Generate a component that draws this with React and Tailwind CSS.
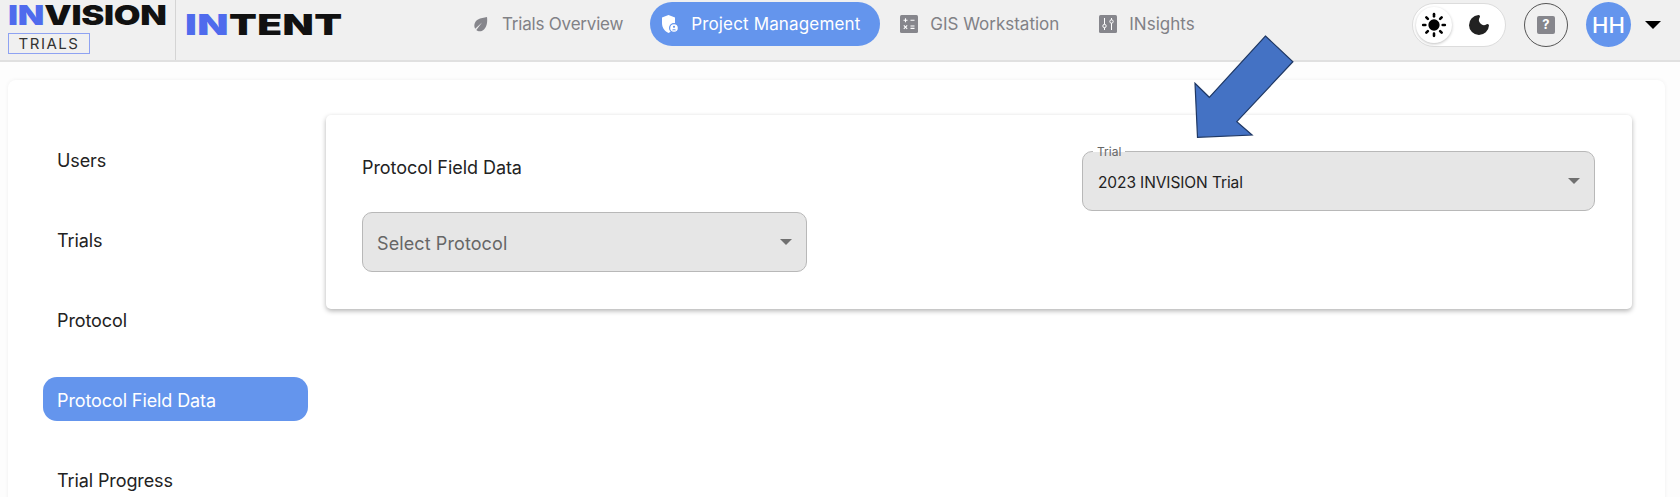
import React from "react";
import { Moon, Sun } from "lucide-react";

const font = { fontFamily: "Inter, 'Noto Sans', sans-serif" };

function Leaf() {
  return (
    <svg width="15" height="17" viewBox="0 0 15 17" fill="#86868c">
      <path d="M14 1C14.600 6 14 10.500 11 13.500C8.500 16 5 15.800 3.300 14L9 6.500L2.200 12.800C0.400 9.600 1.500 5.500 5 3.500C7.500 2 11 2 14 1Z" />
    </svg>
  );
}

function Shield() {
  return (
    <svg width="18" height="20" viewBox="0 0 18 20">
      <path d="M7.500 1L14 3.500V9C14 14 11 17.500 7.500 19C4 17.500 1 14 1 9V3.500Z" fill="#fff" />
      <circle cx="13" cy="14" r="5" fill="#6495ed" />
      <circle cx="13" cy="14" r="3.800" fill="#fff" />
      <circle cx="13" cy="12.800" r="1.100" fill="#6495ed" />
      <path d="M11 16.200C11.300 14.800 14.700 14.800 15 16.200Z" fill="#6495ed" />
    </svg>
  );
}

function Calc() {
  return (
    <svg width="18" height="18" viewBox="0 0 18 18">
      <rect width="18" height="18" rx="1.500" fill="#86868c" />
      <path d="M3.500 5.300H7.500M5.500 3.300V7.300M10.500 5.300H14.500M10.500 11H14.500M10.500 13.400H14.500M3.800 10.400L7.200 13.800M7.200 10.400L3.800 13.800" stroke="#fff" strokeWidth="1.100" />
    </svg>
  );
}

function Sliders() {
  return (
    <svg width="18" height="18" viewBox="0 0 18 18">
      <rect width="18" height="18" rx="1.500" fill="#86868c" />
      <path d="M5.500 3V15M12.500 3V15" stroke="#fff" strokeWidth="1" />
      <circle cx="5.500" cy="11" r="1.700" fill="#86868c" stroke="#fff" />
      <circle cx="12.500" cy="6.500" r="1.700" fill="#86868c" stroke="#fff" />
    </svg>
  );
}

function NavItem({ icon, label, active, className }) {
  return (
    <div
      className={`flex h-11 items-center rounded-full text-[17px] ${
        active ? "bg-[#6495ed] text-white" : "text-[#818186]"
      } ${className}`}
    >
      {icon}
      <span className="pt-[2px]">{label}</span>
    </div>
  );
}

function Caret({ className }) {
  return <div className={`h-0 w-0 border-x-[6px] border-t-[6px] border-x-transparent ${className}`} />;
}

function SelectBox({ label, value, className, textClass }) {
  return (
    <div className={`relative flex h-[60px] items-center justify-between rounded-[10px] border border-[#b8b8b8] bg-[#e6e6e6] pl-[14px] pr-[14px] ${className}`}>
      {label && (
        <span className="absolute -top-[7px] left-[10px] bg-[linear-gradient(#fff_50%,#e6e6e6_50%)] px-[4px] text-xs leading-[14px] text-[#666666]">
          {label}
        </span>
      )}
      <span className={textClass}>{value}</span>
      <Caret className="border-t-[#707070]" />
    </div>
  );
}

const sideItems = ["Users", "Trials", "Protocol", "Protocol Field Data", "Trial Progress"];

export default function App() {
  return (
    <div className="relative h-[497px] w-[1680px] overflow-hidden bg-[#fdfdfd] text-[#222222]" style={font}>
      <header className="flex h-[62px] items-start border-b-2 border-[#e0e0e0] bg-[#f0f0f0]">
        <div className="h-[60px] w-[176px] shrink-0 border-r border-[#d4d4d4] pl-2 pt-[1px]">
          <div className="origin-left scale-x-[1.28] whitespace-nowrap text-[27px] font-black leading-[30px] tracking-[-0.2px] text-[#111111]">
            <span className="text-[#4f6bed]">IN</span>VISION
          </div>
          <div className="mt-[2px] flex h-[21px] w-[82px] items-center justify-center border border-[#8ea2f2] text-[15px] leading-none tracking-[1.5px] text-[#333333]">
            TRIALS
          </div>
        </div>
        <div className="ml-[9px] w-[285px] shrink-0 origin-left scale-x-[1.4] whitespace-nowrap pt-[9px] text-[29px] font-black leading-[32px] tracking-[0.3px] text-[#111111]">
          <span className="text-[#4f6bed]">IN</span>TENT
        </div>
        <nav className="mt-[2px] flex items-center">
          <NavItem icon={<Leaf />} label="Trials Overview" className="gap-[14px] pl-[3px] tracking-[-0.2px]" />
          <NavItem icon={<Shield />} label="Project Management" active className="ml-[27px] w-[230px] gap-[12px] pl-[11px] tracking-[0.15px]" />
          <NavItem icon={<Calc />} label="GIS Workstation" className="ml-[20px] gap-[12px]" />
          <NavItem icon={<Sliders />} label="INsights" className="ml-[40px] gap-[12px]" />
        </nav>
        <div className="ml-auto mr-[19px] mt-[2px] flex items-center">
          <div className="flex h-11 w-[94px] items-center rounded-full border border-[#dcdcdc] bg-white pl-[3px]">
            <div className="flex h-[36px] w-[36px] items-center justify-center rounded-full bg-white shadow-[0_1px_3px_rgba(0,0,0,0.25)]">
              <Sun size={26} strokeWidth={2.4} fill="#000" color="#000" />
            </div>
            <Moon size={24} className="ml-[15px]" fill="#222" color="#222" />
          </div>
          <div className="ml-[18px] flex h-11 w-11 items-center justify-center rounded-full border border-[#555555]">
            <div className="flex h-[18px] w-[18px] items-center justify-center rounded-[2px] bg-[#86868c] text-[13px] font-bold leading-none text-white">?</div>
          </div>
          <div className="ml-[18px] flex h-[45px] w-[45px] items-center justify-center rounded-full bg-[#6495ed] text-[22px] font-medium leading-none text-white">HH</div>
          <div className="ml-[14px] h-0 w-0 border-x-[8px] border-t-[8px] border-x-transparent border-t-black" />
        </div>
      </header>

      <main className="px-2 pt-[18px]">
        <div className="flex h-[500px] w-[1657px] rounded-lg bg-white pl-[35px] pr-[33px] pt-[35px] shadow-[0_0_4px_rgba(0,0,0,0.06)]">
          <aside className="mr-[18px] flex w-[265px] shrink-0 flex-col gap-9 pt-[22px]">
            {sideItems.map((item, i) => (
              <div
                key={item}
                className={`flex h-11 shrink-0 items-center rounded-[14px] pt-[2px] pl-[14px] text-[18px] tracking-[-0.1px] ${
                  i === 3 ? "bg-[#6495ed] text-white" : ""
                }`}
              >
                {item}
              </div>
            ))}
          </aside>
          <section className="flex h-[194px] flex-1 justify-between rounded-[5px] bg-white pb-[37px] pl-[36px] pr-[37px] pt-[36px] shadow-[0_2px_5px_rgba(0,0,0,0.3)]">
            <div className="w-[446px]">
              <div className="flex h-8 items-center pt-[1px] text-[18px] tracking-[-0.05px]">Protocol Field Data</div>
              <SelectBox value="Select Protocol" className="mt-[29px] w-[445px]" textClass="pt-[2px] text-[18px] tracking-[0.1px] text-[#666666]" />
            </div>
            <SelectBox label="Trial" value="2023 INVISION Trial" className="w-[513px]" textClass="pl-[1px] pt-[3px] text-[15.500px] tracking-[-0.1px] text-[#222222]" />
          </section>
        </div>
      </main>

      {/* annotation arrow drawn on top of the screenshot */}
      <svg className="absolute left-0 top-0" width="1680" height="497" viewBox="0 0 1680 497">
        <polygon
          points="1265.400,36 1292.900,61.700 1236.800,121.700 1252.100,135 1197.500,137.300 1195,83.300 1209.300,97.300"
          fill="#4472c4"
          stroke="#1f3864"
          strokeWidth="1.200"
        />
      </svg>
    </div>
  );
}
